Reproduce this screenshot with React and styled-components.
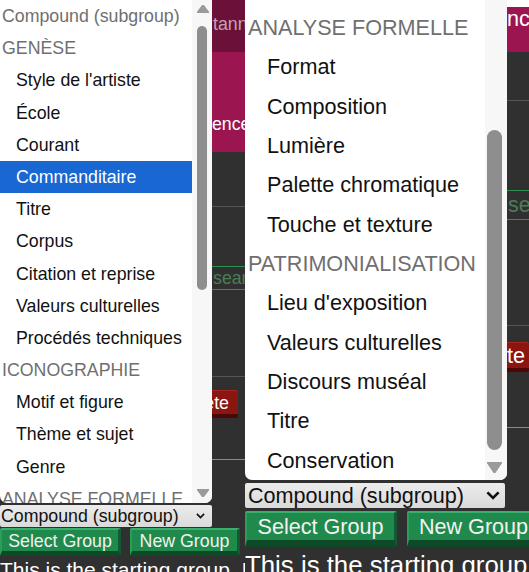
import React from "react";
import styled, { createGlobalStyle } from "styled-components";

const GlobalStyle = createGlobalStyle`
  html, body {
    margin: 0;
    padding: 0;
    background: #303030;
  }
  body {
    font-family: "Liberation Sans", Arial, sans-serif;
    overflow: hidden;
  }
`;

const DARK = "#303030";

const leftPanel = {
  width: 245,
  fs: 17.75,
  lh: 20,
  popup: { w: 212, h: 503, listW: 192, row: 32.2, pt: 0, head: 2, item: 16 },
  track: { w: 20, pad: 5, thumbW: 10, thumbTop: 13, thumbH: 264, arrowW: 12, arrowH: 8, top: 5, bottom: 6, up: true },
  items: [
    { label: "Compound (subgroup)", head: true },
    { label: "GENÈSE", head: true },
    { label: "Style de l'artiste" },
    { label: "École" },
    { label: "Courant" },
    { label: "Commanditaire", selected: true },
    { label: "Titre" },
    { label: "Corpus" },
    { label: "Citation et reprise" },
    { label: "Valeurs culturelles" },
    { label: "Procédés techniques" },
    { label: "ICONOGRAPHIE", head: true },
    { label: "Motif et figure" },
    { label: "Thème et sujet" },
    { label: "Genre" },
    { label: "ANALYSE FORMELLE", head: true },
  ],
  select: { w: 212, h: 22, mt: 2, pl: 1, pr: 7, chev: 9 },
  buttons: { h: 28, mt: 1, gap: 9, widths: [121, 110], bottom: 5 },
  caption: { fs: 21, mt: 2 },
};

const rightPanel = {
  width: 284,
  fs: 21.6,
  lh: 24,
  popup: { w: 262, h: 480, listW: 240, row: 39.35, pt: 8, head: 3, item: 22 },
  track: { w: 22, pad: 2, thumbW: 15, thumbTop: 130, thumbH: 320, arrowW: 15, arrowH: 11, top: 0, bottom: 7, up: false },
  items: [
    { label: "ANALYSE FORMELLE", head: true },
    { label: "Format" },
    { label: "Composition" },
    { label: "Lumière" },
    { label: "Palette chromatique" },
    { label: "Touche et texture" },
    { label: "PATRIMONIALISATION", head: true },
    { label: "Lieu d'exposition" },
    { label: "Valeurs culturelles" },
    { label: "Discours muséal" },
    { label: "Titre" },
    { label: "Conservation" },
  ],
  select: { w: 260, h: 25, mt: 3, pl: 3, pr: 5, chev: 14 },
  buttons: { h: 36, mt: 3, gap: 10, widths: [152, 134], bottom: 7 },
  caption: { fs: 25.8, mt: 3 },
};

/* ---------- page ---------- */

const Page = styled.div`
  display: flex;
  width: 529px;
  height: 572px;
  overflow: hidden;
`;

const Panel = styled.div`
  display: grid;
  flex-shrink: 0;
  width: ${(p) => p.$w}px;
  height: 572px;
  overflow: hidden;
  font-size: ${(p) => p.$fs}px;
  line-height: ${(p) => p.$lh}px;

  > * {
    grid-area: 1 / 1;
    min-width: 0;
  }
`;

/* ---------- app behind the popup ---------- */

const Backdrop = styled.div`
  display: flex;
  flex-direction: column;
  background: ${DARK};
`;

const Band = styled.div`
  flex-shrink: 0;
  height: ${(p) => p.$h}px;
  background: ${(p) => p.$bg || DARK};
  color: ${(p) => p.$color || "#fff"};
  padding-top: ${(p) => p.$pt || 0}px;
  padding-left: ${(p) => p.$x || 0}px;
  box-sizing: border-box;
  white-space: nowrap;
  overflow: hidden;
`;

const Rule = styled.div`
  flex-shrink: 0;
  height: 1px;
  background: ${(p) => p.$c || "#555"};
`;

const Filler = styled.div`
  flex: 1;
`;

const SearchField = styled.div`
  flex-shrink: 0;
  display: flex;
  align-items: center;
  height: ${(p) => p.$h}px;
  box-sizing: border-box;
  border-top: 1px solid #2f9150;
  border-bottom: 1px solid #2f9150;
  padding-left: ${(p) => p.$x}px;
  color: #4a7d56;
  white-space: nowrap;
  overflow: hidden;
`;

const ActionRow = styled.div`
  flex-shrink: 0;
  display: flex;
  justify-content: flex-end;
  height: ${(p) => p.$h}px;
  padding-right: ${(p) => p.$pr}px;
`;

const DeleteButton = styled.div`
  display: flex;
  align-items: center;
  box-sizing: border-box;
  height: 100%;
  padding: 0 ${(p) => p.$padR}px 0 10px;
  color: #fff;
  background: #8b1511;
  border-top: 1px solid #a8241f;
  border-bottom: ${(p) => p.$bottom}px solid #4c0806;
  border-radius: 3px 3px 2px 2px;
  white-space: nowrap;
`;

/* ---------- foreground: popup + controls ---------- */

const Front = styled.div`
  display: flex;
  flex-direction: column;
  align-items: flex-start;
`;

const Popup = styled.div`
  display: flex;
  flex-shrink: 0;
  width: ${(p) => p.$w}px;
  height: ${(p) => p.$h}px;
  background: #fff;
  border-radius: 0 0 7px 7px;
  overflow: hidden;
`;

const List = styled.div`
  width: ${(p) => p.$w}px;
  flex-shrink: 0;
  padding-top: ${(p) => p.$pt}px;
  overflow: hidden;
`;

const Option = styled.div`
  box-sizing: border-box;
  height: ${(p) => p.$row}px;
  padding-top: 1px;
  line-height: ${(p) => p.$row - 1}px;
  padding-left: ${(p) => (p.$head ? p.$headX : p.$itemX)}px;
  color: ${(p) => (p.$selected ? "#fff" : p.$head ? "#6f6f6f" : "#111")};
  background: ${(p) => (p.$selected ? "#1967d2" : "transparent")};
  white-space: nowrap;
`;

const Track = styled.div`
  display: flex;
  flex-direction: column;
  width: ${(p) => p.$w}px;
  flex-shrink: 0;
  box-sizing: border-box;
  padding: ${(p) => p.$top}px 0 ${(p) => p.$bottom}px ${(p) => p.$pad}px;
  background: #f7f7f7;
`;

const Thumb = styled.div`
  width: ${(p) => p.$w}px;
  height: ${(p) => p.$h}px;
  margin-top: ${(p) => p.$mt}px;
  border-radius: ${(p) => p.$w / 2}px;
  background: #8e8e8e;
`;

const ArrowSvg = styled.svg`
  display: block;
  flex-shrink: 0;
`;

const Arrow = ({ w, h, up }) => (
  <ArrowSvg width={w} height={h} viewBox={`0 0 ${w} ${h}`}>
    <polygon
      points={up ? `${w / 2},0 ${w},${h} 0,${h}` : `0,0 ${w},0 ${w / 2},${h}`}
      fill="#9a9a9a"
      stroke="#9a9a9a"
      strokeLinejoin="round"
      strokeWidth="1.5"
    />
  </ArrowSvg>
);

const Select = styled.div`
  display: flex;
  align-items: center;
  justify-content: space-between;
  flex-shrink: 0;
  box-sizing: border-box;
  width: ${(p) => p.$w}px;
  height: ${(p) => p.$h}px;
  margin-top: ${(p) => p.$mt}px;
  padding: 0 ${(p) => p.$pr}px 0 ${(p) => p.$pl}px;
  background: linear-gradient(#ececec, #dadada);
  border-radius: 2px;
  color: #111;
  white-space: nowrap;
`;

const Chevron = ({ size }) => (
  <svg width={size} height={size * 0.6} viewBox="0 0 10 6">
    <polyline points="1,1 5,5 9,1" fill="none" stroke="#111" strokeWidth="1.9" />
  </svg>
);

const ButtonRow = styled.div`
  display: flex;
  gap: ${(p) => p.$gap}px;
  margin-top: ${(p) => p.$mt}px;
  flex-shrink: 0;
`;

const GreenButton = styled.div`
  display: flex;
  align-items: center;
  justify-content: center;
  flex-shrink: 0;
  box-sizing: border-box;
  width: ${(p) => p.$w}px;
  height: ${(p) => p.$h}px;
  color: #f2f2f2;
  background: #1f8a4c;
  border-top: 2px solid #3aae6c;
  border-left: 2px solid #2c9c5b;
  border-right: 3px solid #125a33;
  border-bottom: ${(p) => p.$bottom}px solid #0e4a27;
  border-radius: 2px;
  white-space: nowrap;
`;

const Caption = styled.div`
  margin-top: ${(p) => p.$mt}px;
  font-size: ${(p) => p.$fs}px;
  line-height: ${(p) => Math.round(p.$fs * 1.15)}px;
  color: #fff;
  white-space: nowrap;
`;

/* ---------- pieces ---------- */

const Dropdown = ({ cfg }) => {
  const { popup, track, items } = cfg;
  return (
    <Popup $w={popup.w} $h={popup.h}>
      <List $w={popup.listW} $pt={popup.pt}>
        {items.map((it, i) => (
          <Option
            key={i}
            $row={popup.row}
            $head={it.head}
            $selected={it.selected}
            $headX={popup.head}
            $itemX={popup.item}
          >
            {it.label}
          </Option>
        ))}
      </List>
      <Track $w={track.w} $pad={track.pad} $top={track.top} $bottom={track.bottom}>
        {track.up && <Arrow w={track.arrowW} h={track.arrowH} up />}
        <Thumb $w={track.thumbW} $h={track.thumbH} $mt={track.thumbTop} />
        <Filler />
        <Arrow w={track.arrowW} h={track.arrowH} />
      </Track>
    </Popup>
  );
};

const Controls = ({ cfg }) => {
  const { select, buttons, caption } = cfg;
  return (
    <>
      <Select $w={select.w} $h={select.h} $mt={select.mt} $pl={select.pl} $pr={select.pr}>
        Compound (subgroup)
        <Chevron size={select.chev} />
      </Select>
      <ButtonRow $gap={buttons.gap} $mt={buttons.mt}>
        <GreenButton $w={buttons.widths[0]} $h={buttons.h} $bottom={buttons.bottom}>
          Select Group
        </GreenButton>
        <GreenButton $w={buttons.widths[1]} $h={buttons.h} $bottom={buttons.bottom}>
          New Group
        </GreenButton>
      </ButtonRow>
      <Caption $fs={caption.fs} $mt={caption.mt}>
        This is the starting group. It
      </Caption>
    </>
  );
};

const App = () => (
  <>
    <GlobalStyle />
    <Page>
      <Panel $w={leftPanel.width} $fs={leftPanel.fs} $lh={leftPanel.lh}>
        <Backdrop>
          <Band $h={52} $bg="#6b1038" $color="rgba(255,255,255,0.62)" $pt={14} $x={213}>
            tanne
          </Band>
          <Band $h={100} $bg="#9b1651" $pt={62} $x={212}>
            ence
          </Band>
          <Band $h={54} />
          <Rule />
          <Band $h={59} />
          <SearchField $h={24} $x={213}>
            search
          </SearchField>
          <Band $h={86} />
          <Rule />
          <Band $h={13} />
          <ActionRow $h={28} $pr={7}>
            <DeleteButton $padR={9} $bottom={4}>Delete</DeleteButton>
          </ActionRow>
          <Band $h={41} />
          <Rule $c="#8a8a8a" />
          <Filler />
        </Backdrop>
        <Front>
          <Dropdown cfg={leftPanel} />
          <Controls cfg={leftPanel} />
        </Front>
      </Panel>

      <Panel $w={rightPanel.width} $fs={rightPanel.fs} $lh={rightPanel.lh}>
        <Backdrop>
          <Band $h={7} $bg="#fff" />
          <Band $h={45} $bg="#9b1651" $pt={0} $x={250}>
            ence
          </Band>
          <Band $h={48} />
          <Rule />
          <Band $h={89} />
          <SearchField $h={30} $x={263}>
            search
          </SearchField>
          <Band $h={105} />
          <Rule />
          <Band $h={16} />
          <ActionRow $h={30} $pr={0}>
            <DeleteButton $padR={4} $bottom={4}>Delete</DeleteButton>
          </ActionRow>
          <Band $h={55} />
          <Rule $c="#8a8a8a" />
          <Filler />
        </Backdrop>
        <Front>
          <Dropdown cfg={rightPanel} />
          <Controls cfg={rightPanel} />
        </Front>
      </Panel>
    </Page>
  </>
);

export default App;
